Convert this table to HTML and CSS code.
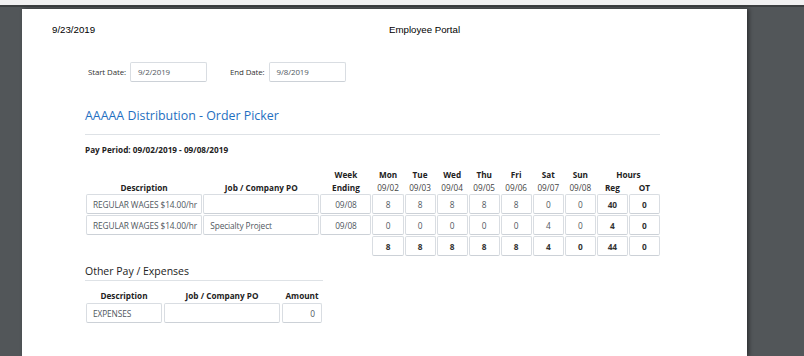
FILE: index.html
```html
<!DOCTYPE html>
<html lang="en">
<head>
<meta charset="UTF-8">
<meta name="viewport" content="width=device-width, initial-scale=1.0">
<title>Employee Portal</title>
<link rel="stylesheet" href="styles.css">
</head>
<body>
<div class="toolbar"></div>
<div class="sheet">
  <header class="print-head">
    <span>9/23/2019</span>
    <span>Employee Portal</span>
  </header>

  <div class="content">
    <div class="date-range">
      <label class="date-label">Start Date:</label>
      <span class="field date-field">9/2/2019</span>
      <label class="date-label end">End Date:</label>
      <span class="field date-field">9/8/2019</span>
    </div>

    <h2 class="job-title">AAAAA Distribution - Order Picker</h2>
    <p class="period">Pay Period: 09/02/2019 - 09/08/2019</p>

    <table class="hours">
      <colgroup>
        <col class="c-desc"><col class="c-job"><col class="c-week">
        <col class="c-day"><col class="c-day"><col class="c-day"><col class="c-day">
        <col class="c-day"><col class="c-day"><col class="c-day">
        <col class="c-day"><col class="c-day">
      </colgroup>
      <thead>
        <tr class="head-top">
          <th></th><th></th><th>Week</th>
          <th>Mon</th><th>Tue</th><th>Wed</th><th>Thu</th><th>Fri</th><th>Sat</th><th>Sun</th>
          <th colspan="2">Hours</th>
        </tr>
        <tr>
          <th>Description</th><th>Job / Company PO</th><th>Ending</th>
          <th class="day">09/02</th><th class="day">09/03</th><th class="day">09/04</th><th class="day">09/05</th>
          <th class="day">09/06</th><th class="day">09/07</th><th class="day">09/08</th>
          <th>Reg</th><th>OT</th>
        </tr>
      </thead>
      <tbody>
        <tr>
          <td><span class="field">REGULAR WAGES $14.00/hr</span></td>
          <td><span class="field"></span></td>
          <td><span class="field mid">09/08</span></td>
          <td><span class="field num">8</span></td><td><span class="field num">8</span></td>
          <td><span class="field num">8</span></td><td><span class="field num">8</span></td>
          <td><span class="field num">8</span></td><td><span class="field num">0</span></td>
          <td><span class="field num">0</span></td>
          <td><span class="field num strong">40</span></td><td><span class="field num strong">0</span></td>
        </tr>
        <tr>
          <td><span class="field">REGULAR WAGES $14.00/hr</span></td>
          <td><span class="field">Specialty Project</span></td>
          <td><span class="field mid">09/08</span></td>
          <td><span class="field num">0</span></td><td><span class="field num">0</span></td>
          <td><span class="field num">0</span></td><td><span class="field num">0</span></td>
          <td><span class="field num">0</span></td><td><span class="field num">4</span></td>
          <td><span class="field num">0</span></td>
          <td><span class="field num strong">4</span></td><td><span class="field num strong">0</span></td>
        </tr>
        <tr>
          <td></td><td></td><td></td>
          <td><span class="field num strong">8</span></td><td><span class="field num strong">8</span></td>
          <td><span class="field num strong">8</span></td><td><span class="field num strong">8</span></td>
          <td><span class="field num strong">8</span></td><td><span class="field num strong">4</span></td>
          <td><span class="field num strong">0</span></td>
          <td><span class="field num strong">44</span></td><td><span class="field num strong">0</span></td>
        </tr>
      </tbody>
    </table>

    <h3 class="section-title">Other Pay / Expenses</h3>
    <table class="expenses">
      <colgroup>
        <col class="e-desc"><col class="e-job"><col class="e-amt">
      </colgroup>
      <thead>
        <tr><th>Description</th><th>Job / Company PO</th><th>Amount</th></tr>
      </thead>
      <tbody>
        <tr>
          <td><span class="field">EXPENSES</span></td>
          <td><span class="field"></span></td>
          <td><span class="field amount">0</span></td>
        </tr>
      </tbody>
    </table>
  </div>
</div>
</body>
</html>
```

FILE: styles.css
```css
html, body {
  margin: 0;
  padding: 0;
  height: 356px;
  overflow: hidden;
}

body {
  background-color: #525659;
  font-family: "Open Sans", "Noto Sans", sans-serif;
  color: #212529;
}

.toolbar {
  height: 5px;
  background-color: #f1f1f2;
  border-bottom: 2px solid #3c3f41;
}

.sheet {
  margin: 2px 0 0 22px;
  width: 725px;
  height: 347px;
  overflow: hidden;
  background-color: #fff;
  box-shadow: 2px 0 4px rgba(0, 0, 0, 0.45);
}

/* print header: date on the left, page title */
.print-head {
  display: grid;
  grid-template-columns: 337px auto;
  padding: 15px 0 0 30px;
  font-family: "Liberation Sans", Arial, sans-serif;
  font-size: 9.7px;
  line-height: 12px;
  color: #000;
}

.content {
  padding-left: 63px;
}

.field {
  display: flex;
  align-items: center;
  box-sizing: border-box;
  height: 20px;
  padding: 0 6px;
  border: 1px solid #d9dde2;
  border-bottom-color: #ccd1d7;
  border-radius: 2px;
  font-size: 8.3px;
  letter-spacing: -0.1px;
  color: #50575e;
  white-space: nowrap;
  overflow: hidden;
}

/* date range */
.date-range {
  display: flex;
  align-items: center;
  margin-top: 26px;
  padding-left: 3px;
}

.date-label {
  font-size: 7.9px;
  letter-spacing: -0.1px;
  color: #333;
  margin-right: 4px;
}

.date-label.end {
  margin-left: 23px;
}

.date-field {
  width: 77px;
  padding-left: 7px;
  font-size: 7.9px;
}

.job-title {
  margin: 26px 0 0;
  width: 575px;
  padding-bottom: 10px;
  border-bottom: 1px solid #dee2e6;
  font-size: 12.4px;
  line-height: 16px;
  font-weight: 400;
  color: #1f6fc1;
}

.period {
  margin: 9px 0 0;
  font-size: 8.2px;
  line-height: 11px;
  font-weight: 700;
  color: #222;
}

/* hours table */
table {
  border-collapse: separate;
  table-layout: fixed;
}

.hours {
  width: 576px;
  margin-top: 12px;
  border-spacing: 1px;
}

.c-desc, .c-job { width: 116px; }
.c-week { width: 51px; }
.c-day { width: 31px; }

th {
  padding: 0;
  font-size: 8.2px;
  line-height: 11px;
  font-weight: 700;
  color: #222;
  text-align: center;
}

.head-top th {
  padding: 1px 0;
}

th.day {
  font-weight: 400;
  color: #444;
}

td {
  padding: 0;
}

.num, .mid {
  justify-content: center;
  padding: 0;
}

.strong {
  font-weight: 700;
  color: #333;
}

/* other pay */
.section-title {
  margin: 7px 0 0;
  width: 238px;
  padding-bottom: 2px;
  border-bottom: 1px solid #dee2e6;
  font-size: 10.5px;
  line-height: 14px;
  font-weight: 400;
  color: #222;
}

.expenses {
  width: 240px;
  margin: 7px 0 0 -1px;
  border-spacing: 2px;
}

.e-desc { width: 76px; }
.e-job { width: 116px; }
.e-amt { width: 40px; }

.amount {
  justify-content: flex-end;
}
```
